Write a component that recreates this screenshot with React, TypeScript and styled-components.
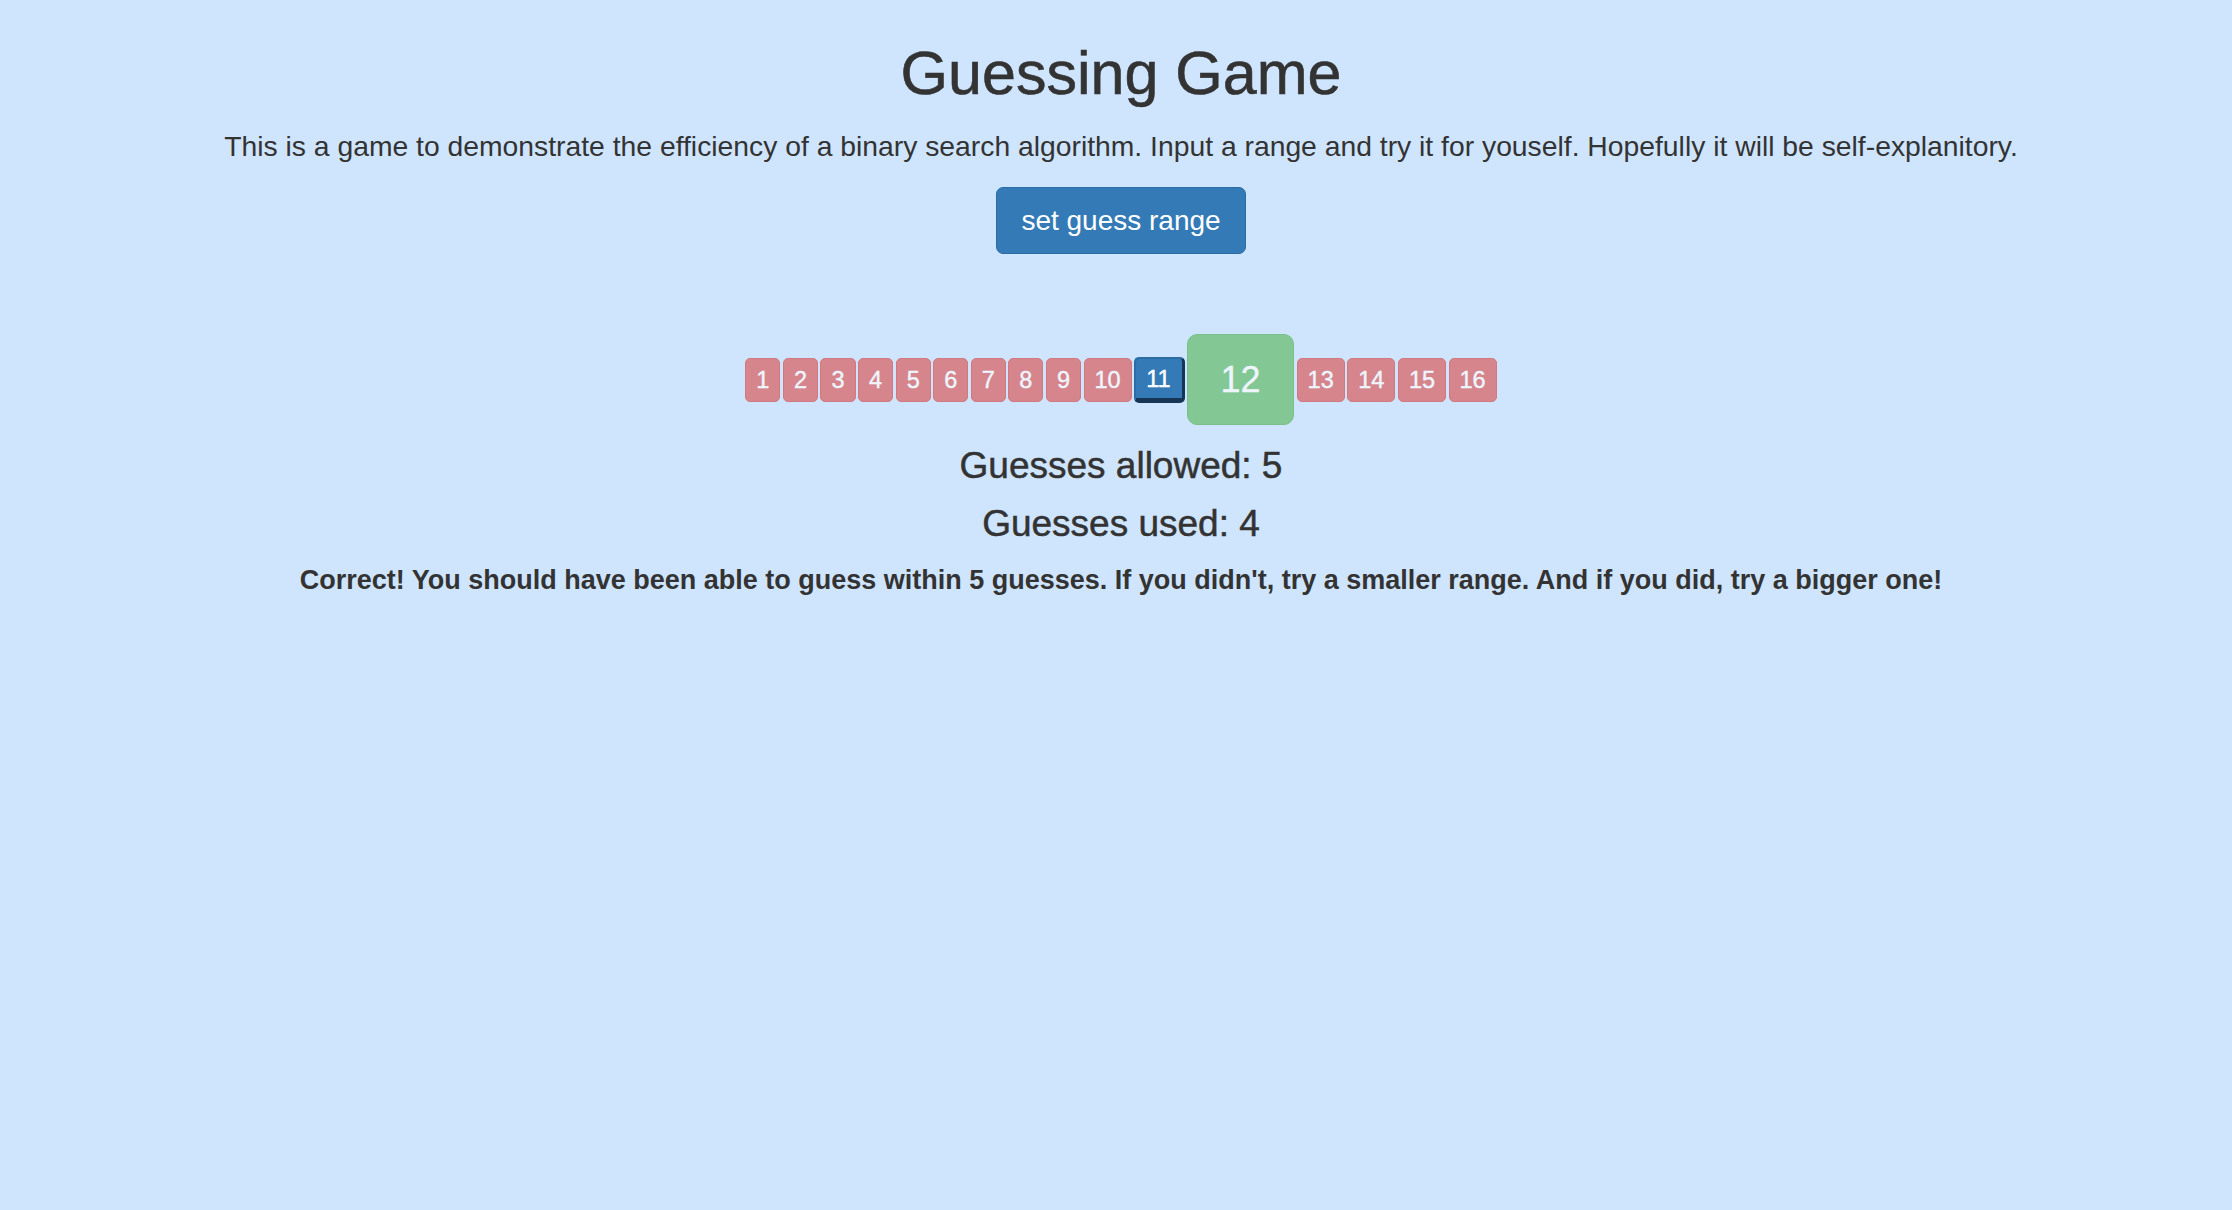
import React from "react";
import styled, { createGlobalStyle, css } from "styled-components";

const GlobalStyle = createGlobalStyle`
  html, body {
    margin: 0;
    padding: 0;
    background: #cfe5fe;
  }
  body {
    font-family: "Liberation Sans", Arial, Helvetica, sans-serif;
    color: #333333;
    min-height: 1210px;
  }
`;

const Page = styled.main`
  display: flex;
  flex-direction: column;
  align-items: center;
  text-align: center;
  padding: 40px 0 0 10px;
`;

const Title = styled.h1`
  margin: 0;
  font-size: 61px;
  line-height: 67px;
  font-weight: 500;
  color: #333333;
  -webkit-text-stroke: 0.6px #333333;
`;

const Intro = styled.p`
  margin: 19px 0 0;
  font-size: 28.3px;
  line-height: 40px;
`;

const RangeButton = styled.button`
  margin-top: 21px;
  font-family: inherit;
  font-size: 28px;
  line-height: 39px;
  padding: 13px 24px;
  color: #ffffff;
  background: #337ab7;
  border: 1px solid #2e6da4;
  border-radius: 7px;
  cursor: pointer;
`;

const TileRow = styled.div`
  margin-top: 80px;
  display: flex;
  align-items: center;
  gap: 2.5px;
`;

type TileKind = "miss" | "current" | "hit";

const Tile = styled.button<{ $kind: TileKind }>`
  font-family: inherit;
  font-size: 23.5px;
  line-height: 30px;
  padding: 6px 10px;
  color: #ffffff;
  -webkit-text-stroke: 0.4px #ffffff;
  border-style: solid;
  border-width: 1px;
  border-radius: 5px;
  cursor: default;

  ${({ $kind }) =>
    $kind === "miss" &&
    css`
      background: #d9534f;
      border-color: #d43f3a;
      opacity: 0.65;
    `}

  ${({ $kind }) =>
    $kind === "current" &&
    css`
      background: #337ab7;
      padding: 5px 11px 4px 10px;
      border-width: 2px 3px 5px 2px;
      border-color: #2e6da4 #173656 #173656 #2e6da4;
    `}

  ${({ $kind }) =>
    $kind === "hit" &&
    css`
      background: #5cb85c;
      border-color: #4cae4c;
      opacity: 0.65;
      font-size: 36px;
      line-height: 48px;
      padding: 20.5px 32.5px;
      border-radius: 10px;
      -webkit-text-stroke: 0.3px #ffffff;
    `}
`;

const Stat = styled.h3`
  margin: 20.5px 0 0;
  font-size: 37px;
  line-height: 39.6px;
  font-weight: 500;
  color: #333333;
  -webkit-text-stroke: 0.5px #333333;
  & + & {
    margin-top: 18.8px;
  }
`;

const Verdict = styled.p`
  margin: 17.8px 0 0;
  font-size: 27px;
  line-height: 38px;
  font-weight: bold;
`;

const numbers = Array.from({ length: 16 }, (_, i) => i + 1);
const guessed = 11;
const answer = 12;

export default function App() {
  return (
    <>
      <GlobalStyle />
      <Page>
        <Title>Guessing Game</Title>
        <Intro>
          This is a game to demonstrate the efficiency of a binary search algorithm. Input a range
          and try it for youself. Hopefully it will be self-explanitory.
        </Intro>
        <RangeButton type="button">set guess range</RangeButton>
        <TileRow>
          {numbers.map((n) => (
            <Tile
              key={n}
              type="button"
              $kind={n === answer ? "hit" : n === guessed ? "current" : "miss"}
            >
              {n}
            </Tile>
          ))}
        </TileRow>
        <Stat>Guesses allowed: 5</Stat>
        <Stat>Guesses used: 4</Stat>
        <Verdict>
          Correct! You should have been able to guess within 5 guesses. If you didn't, try a smaller
          range. And if you did, try a bigger one!
        </Verdict>
      </Page>
    </>
  );
}
